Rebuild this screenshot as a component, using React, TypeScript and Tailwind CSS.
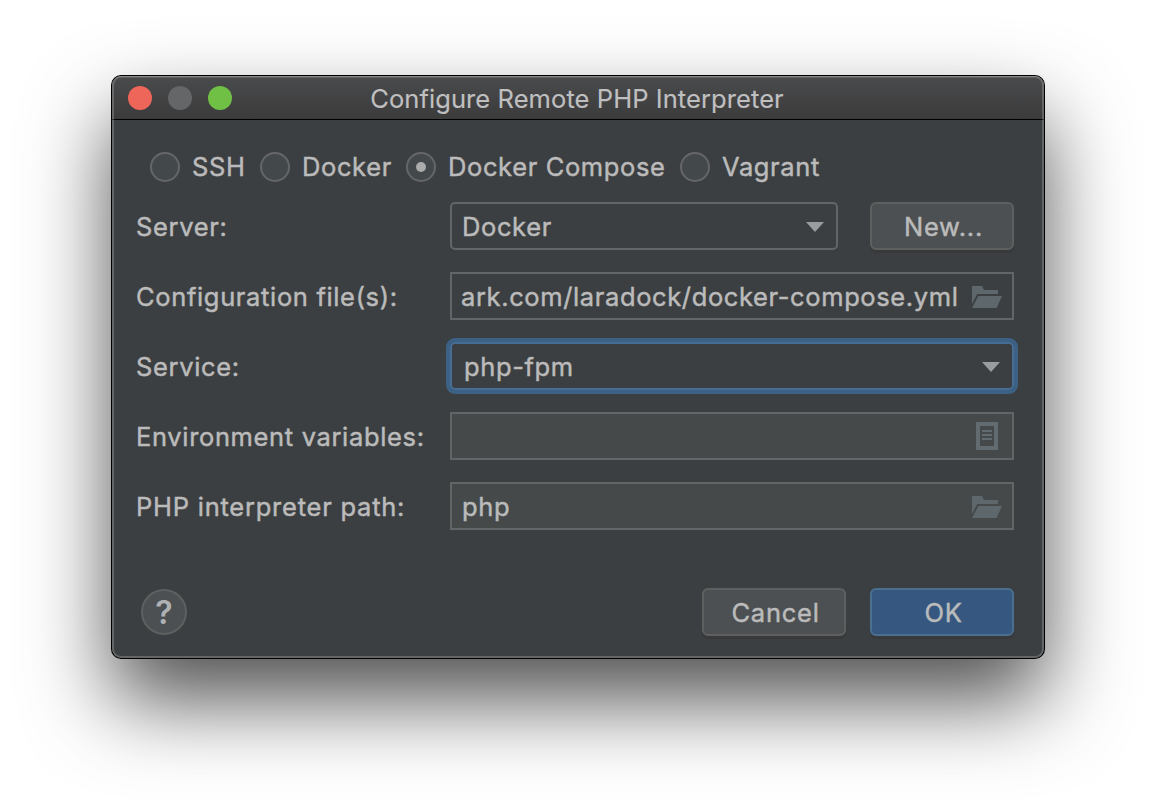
import type { ReactNode } from "react";

function Radio({ label, checked, className }: { label: string; checked?: boolean; className: string }) {
  return (
    <label className={`flex items-center gap-3 ${className}`}>
      <span className="flex size-[30px] shrink-0 items-center justify-center rounded-full border-2 border-[#656667] bg-[#43494a]">
        {checked && <span className="size-2.5 rounded-full bg-[#ababab]" />}
      </span>
      <span className="whitespace-nowrap">{label}</span>
    </label>
  );
}

function Row({ label, tracking = "tracking-[0.65px]", children }: { label: string; tracking?: string; children: ReactNode }) {
  return (
    <div className="flex h-12 items-center">
      <span className={`w-[314px] shrink-0 whitespace-nowrap pb-px pt-[3px] ${tracking}`}>{label}</span>
      {children}
    </div>
  );
}

function Arrow() {
  return (
    <svg className="mt-0.5 h-2.5 w-[18px] shrink-0" viewBox="0 0 18 10">
      <path d="M0 0H18L9 10Z" fill="#9a9da0" />
    </svg>
  );
}

function Folder() {
  return (
    <svg className="mt-0.5 h-[22px] w-[30px] shrink-0" viewBox="0 0 30 22">
      <path d="M0 0H10L12 4H26V8H5.2L0 18Z M6.3 10H30L24.6 22H0Z" fill="#5e686c" />
    </svg>
  );
}

function Document() {
  return (
    <svg className="h-7 w-[22px] shrink-0" viewBox="0 0 22 28" shapeRendering="crispEdges">
      <path d="M0 0H22V28H0Z M4 4V24H18V4Z M6 8H16V10H6Z M6 12H16V14H6Z M6 16H16V18H6Z" fill="#616b70" fillRule="evenodd" />
    </svg>
  );
}

function Button({ label, primary }: { label: string; primary?: boolean }) {
  return (
    <button
      className={`flex h-12 w-36 shrink-0 items-center justify-center rounded-[6px] border-2 pl-[3px] pt-0.5 tracking-[0.75px] shadow-[0_3px_0_#37393a] ${
        primary ? "border-[#4a6f8f] bg-[#365880]" : "border-[#5e6060] bg-[#4c5052]"
      }`}
    >
      {label}
    </button>
  );
}

export default function App() {
  return (
    <div className="flex h-[806px] w-[1156px] items-start justify-center overflow-hidden bg-white pt-[76px] font-['Inter',sans-serif] text-[25.5px] leading-[30px] tracking-[0.62px] text-[#bbbbbb]">
      <div className="relative flex h-[582px] w-[932px] flex-col rounded-[9px] bg-[#3c3f41] shadow-[0_0_0_1px_#000,0_42px_84px_rgba(0,0,0,0.69)]">
        <div className="flex h-11 items-center rounded-t-[9px] border-b border-black bg-linear-to-b from-[#4a4b4c] to-[#3b3b3c] pl-4">
          <div className="flex w-[104px] gap-4">
            <span className="size-6 rounded-full bg-[#ee6559]" />
            <span className="size-6 rounded-full bg-[#656667]" />
            <span className="size-6 rounded-full bg-[#70c046]" />
          </div>
          <h1 className="grow pr-[122px] pt-[3px] text-center tracking-[0.08px] text-[#bfbfc0] [-webkit-text-stroke:0.15px]">Configure Remote PHP Interpreter</h1>
        </div>

        <div className="flex grow flex-col pl-6 pr-[30px] pt-8 [-webkit-text-stroke:0.45px]">
          <div className="flex pl-3.5">
            <Radio label="SSH" className="w-[110px]" />
            <Radio label="Docker" className="w-[146px]" />
            <Radio label="Docker Compose" checked className="w-[274px]" />
            <Radio label="Vagrant" className="w-[160px]" />
          </div>

          <div className="mt-5 flex flex-col gap-[22px]">
            <Row label="Server:">
              <div className="flex h-12 w-[388px] items-center justify-between rounded-[5px] border-2 border-[#646566] pl-2.5 pr-3">
                <span className="pt-0.5">Docker</span>
                <Arrow />
              </div>
              <div className="ml-8">
                <Button label="New..." />
              </div>
            </Row>
            <Row label="Configuration file(s):">
              <div className="flex h-12 grow items-center justify-between border-2 border-[#646566] pl-[9px] pr-2.5">
                <span className="whitespace-nowrap pt-0.5">ark.com/laradock/docker-compose.yml</span>
                <Folder />
              </div>
            </Row>
            <Row label="Service:">
              <div className="flex h-12 grow items-center justify-between rounded-[5px] border-2 border-[#466d94] pl-3 pr-3 shadow-[0_0_0_4px_#3d6185]">
                <span className="pt-0.5">php-fpm</span>
                <Arrow />
              </div>
            </Row>
            <Row label="Environment variables:">
              <div className="flex h-12 grow items-center justify-end border-2 border-[#646566] bg-[#45494a] pr-3.5">
                <Document />
              </div>
            </Row>
            <Row label="PHP interpreter path:" tracking="tracking-[0.76px]">
              <div className="flex h-12 grow items-center justify-between border-2 border-[#646566] bg-[#45494a] pl-2.5 pr-2.5">
                <span className="pt-0.5">php</span>
                <Folder />
              </div>
            </Row>
          </div>

          <div className="mt-[58px] flex items-center gap-6">
            <button className="ml-[5px] mr-auto flex size-[46px] items-center justify-center rounded-full border-2 border-[#5e6060] bg-[#4c5052] pt-0.5 text-[32px] font-semibold tracking-normal text-[#afb1b3] [-webkit-text-stroke:0]">
              ?
            </button>
            <Button label="Cancel" />
            <Button label="OK" primary />
          </div>
        </div>

        <div className="pointer-events-none absolute inset-0 rounded-[9px] border-2 border-t border-white/20 border-t-white/35 shadow-[inset_0_1px_0_rgba(255,255,255,0.12)]" />
      </div>
    </div>
  );
}
